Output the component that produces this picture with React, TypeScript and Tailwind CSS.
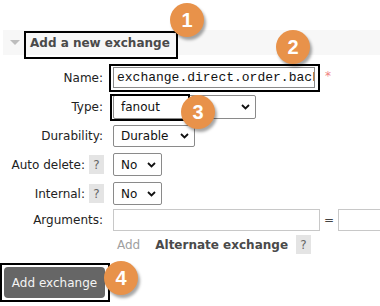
import React from "react";

const ff = { fontFamily: '"DejaVu Sans", Verdana, sans-serif' };

function Chevron() {
  return (
    <svg width="9" height="6" viewBox="0 0 9 6" className="absolute right-[6px] top-1/2 -translate-y-1/2 pointer-events-none">
      <path d="M1 1 L4.5 4.5 L8 1" fill="none" stroke="#111" strokeWidth="1.8" />
    </svg>
  );
}

function Sel({ w, h, value }: { w: string; h: string; value: string }) {
  return (
    <div className={`relative shrink-0 ${w} ${h}`}>
      <div className="w-full h-full border border-[#8a8a8a] rounded-[2px] bg-white flex items-center pl-[7px] text-[12px] text-[#111]">
        {value}
      </div>
      <Chevron />
    </div>
  );
}

function Help() {
  return (
    <span className="inline-flex w-[15px] h-[19px] items-center justify-center bg-[#e4e4e4] text-[#666] text-[12px]">?</span>
  );
}

function Badge({ n, className }: { n: string; className: string }) {
  return (
    <div
      className={`absolute w-[34px] h-[34px] rounded-full bg-[#e8924a] text-white flex items-center justify-center text-[20px] font-bold shadow-[2px_3px_3px_rgba(0,0,0,0.35)] ${className}`}
      style={{ fontFamily: '"Liberation Sans", Arial, sans-serif' }}
    >
      {n}
    </div>
  );
}

export default function App() {
  return (
    <div className="relative w-[380px] h-[306px] overflow-hidden bg-white text-[#222]" style={ff}>
      <div className="pt-[30px]">
        <div className="ml-[3px] h-[25px] bg-[#f7f7f7] flex items-center">
          <svg width="10" height="6" viewBox="0 0 10 6" className="ml-[7px]">
            <path d="M0 0 L10 0 L5 5 Z" fill="#bdbdbd" />
          </svg>
          <span className="ml-[10px] text-[12px] font-bold text-[#4a4a4a]">Add a new exchange</span>
        </div>

        <div className="mt-[11px] flex flex-col text-[12px]">
          {/* Name */}
          <div className="flex items-center h-[23px]">
            <div className="w-[104px] shrink-0 text-right pr-px">Name:</div>
            <div className="ml-[9px] shrink-0 w-[202px] h-[21px] border border-[#8a8a8a] flex items-center pl-[3px] overflow-hidden whitespace-nowrap text-[13px] text-[#111]" style={{ fontFamily: '"Liberation Mono", "Courier New", monospace' }}>
              exchange.direct.order.backup
            </div>
            <span className="ml-[10px] shrink-0 text-[#f08080] text-[12px] self-start mt-[1px]">*</span>
          </div>
          {/* Type */}
          <div className="flex items-center h-[24px] mt-[6px]">
            <div className="w-[104px] shrink-0 text-right pr-px">Type:</div>
            <div className="ml-[9px]"><Sel w="w-[143px]" h="h-[24px]" value="fanout" /></div>
          </div>
          {/* Durability */}
          <div className="flex items-center h-[22px] mt-[6px]">
            <div className="w-[104px] shrink-0 text-right pr-px">Durability:</div>
            <div className="ml-[9px]"><Sel w="w-[82px]" h="h-[22px]" value="Durable" /></div>
          </div>
          {/* Auto delete */}
          <div className="flex items-center h-[23px] mt-[6px]">
            <div className="w-[104px] shrink-0 flex items-center justify-end">
              <span>Auto delete:</span>
              <span className="ml-[4px]"><Help /></span>
            </div>
            <div className="ml-[9px]"><Sel w="w-[49px]" h="h-[23px]" value="No" /></div>
          </div>
          {/* Internal */}
          <div className="flex items-center h-[23px] mt-[6px]">
            <div className="w-[104px] shrink-0 flex items-center justify-end">
              <span>Internal:</span>
              <span className="ml-[4px]"><Help /></span>
            </div>
            <div className="ml-[9px]"><Sel w="w-[49px]" h="h-[23px]" value="No" /></div>
          </div>
          {/* Arguments */}
          <div className="flex items-center h-[22px] mt-[4px]">
            <div className="w-[104px] shrink-0 text-right pr-px">Arguments:</div>
            <div className="ml-[9px] shrink-0 w-[207px] h-[22px] border border-[#c8c8c8] bg-white" />
            <span className="ml-[4px] shrink-0 text-[#444]">=</span>
            <div className="ml-[4px] shrink-0 w-[80px] h-[22px] border border-[#c8c8c8] bg-white" />
          </div>
          {/* Add row */}
          <div className="flex items-center h-[19px] mt-[4px]">
            <span className="ml-[117px] text-[#a0a0a0]">Add</span>
            <span className="ml-[15px] font-bold text-[#4a4a4a]">Alternate exchange</span>
            <span className="ml-[8px]"><Help /></span>
          </div>
          {/* Button */}
          <div className="mt-[13px] ml-[4px]">
            <div className="w-[101px] h-[31px] rounded-[4px] bg-[#666] text-[#f4f4f4] flex items-center justify-center text-[12px]">
              Add exchange
            </div>
          </div>
        </div>
      </div>

      {/* annotation boxes */}
      <div className="absolute left-[24px] top-[31px] w-[154px] h-[28px] border-2 border-black" />
      <div className="absolute left-[109px] top-[64px] w-[211px] h-[28px] border-2 border-black" />
      <div className="absolute left-[110px] top-[94px] w-[80px] h-[27px] border-2 border-black" />
      <div className="absolute left-0 top-[263px] w-[110px] h-[39px] border-2 border-black" />

      <Badge n="1" className="left-[170px] top-[3px]" />
      <Badge n="2" className="left-[276px] top-[30px]" />
      <Badge n="3" className="left-[181px] top-[95px]" />
      <Badge n="4" className="left-[104px] top-[261px]" />
    </div>
  );
}
